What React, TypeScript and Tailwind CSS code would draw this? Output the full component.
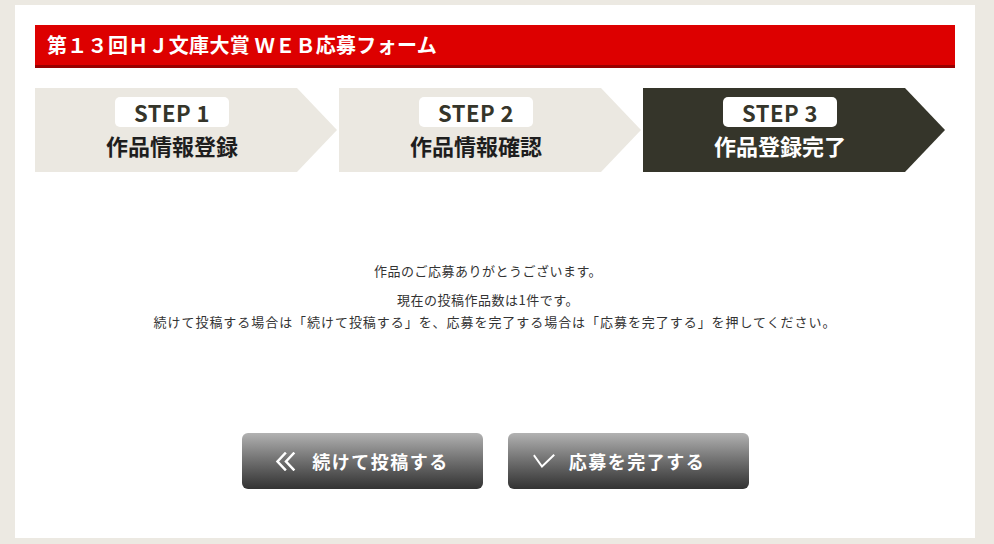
import React from "react";

const jp = { fontFamily: '"Noto Sans CJK JP", "Noto Sans", sans-serif' };

function Step({ n, label, active }: { n: number; label: string; active?: boolean }) {
  return (
    <div
      className={`h-[84px] w-[302px] shrink-0 [clip-path:polygon(0_0,calc(100%-40px)_0,100%_50%,calc(100%-40px)_100%,0_100%)] flex flex-col items-center pr-[28px] pt-[9px] ${
        active ? "bg-[#35352a]" : "bg-[#ebe8e1]"
      }`}
    >
      <div className="w-[114px] h-[30px] rounded-[5px] bg-white flex items-center justify-center text-[22px] font-bold text-[#35352a] leading-none tracking-[0.5px]">
        STEP {n}
      </div>
      <div
        className={`mt-[4px] text-[22px] font-bold leading-[28px] ${active ? "text-white" : "text-[#1e1e1e]"}`}
      >
        {label}
      </div>
    </div>
  );
}

function ChevronsLeft() {
  return (
    <svg width="21" height="19" viewBox="0 0 21 19" fill="none" stroke="white" strokeWidth="2.5" strokeLinecap="square">
      <polyline points="10,1.5 2.5,9.5 10,17.5" />
      <polyline points="18.5,1.5 11,9.5 18.5,17.5" />
    </svg>
  );
}

function Check() {
  return (
    <svg width="22" height="14" viewBox="0 0 22 14" fill="none" stroke="white" strokeWidth="2" strokeLinecap="square">
      <polyline points="1.5,2 9,12.5 20.5,1.5" />
    </svg>
  );
}

export default function App() {
  return (
    <div className="min-h-[544px] bg-[#ece9e2] pt-[5px] pl-[15px]" style={jp}>
      <div className="bg-white w-[960px] h-[533px] px-[20px] pt-[20px]">
        <div className="h-[43px] bg-[#dd0000] border-b-[3px] border-[#990000] flex items-center pl-[12px]">
          <span className="text-white font-bold text-[20px] leading-none tracking-[0.3px]">
            第１３回ＨＪ文庫大賞 ＷＥＢ応募フォーム
          </span>
        </div>

        <div className="mt-[20px] flex gap-[2px]">
          <Step n={1} label="作品情報登録" />
          <Step n={2} label="作品情報確認" />
          <Step n={3} label="作品登録完了" active />
        </div>

        <div className="mt-[88px] text-center text-[13px] leading-[22px] text-[#333] tracking-[0.5px]">
          <p className="mr-[14px]">作品のご応募ありがとうございます。</p>
          <p className="mt-[7px] mr-[14px]">現在の投稿作品数は1件です。</p>
          <p className="tracking-[0.95px]">続けて投稿する場合は「続けて投稿する」を、応募を完了する場合は「応募を完了する」を押してください。</p>
        </div>

        <div className="mt-[100px] flex justify-center gap-[25px]">
          <button className="w-[241px] h-[56px] rounded-[6px] bg-gradient-to-b from-[#b2b2b2] to-[#333333] flex items-center justify-center gap-[16px] text-white font-bold text-[18px] tracking-[1.5px]">
            <ChevronsLeft />
            <span>続けて投稿する</span>
          </button>
          <button className="w-[241px] h-[56px] rounded-[6px] bg-gradient-to-b from-[#b2b2b2] to-[#333333] flex items-center justify-center gap-[14px] pr-[18px] text-white font-bold text-[18px] tracking-[1.5px]">
            <Check />
            <span>応募を完了する</span>
          </button>
        </div>
      </div>
    </div>
  );
}
